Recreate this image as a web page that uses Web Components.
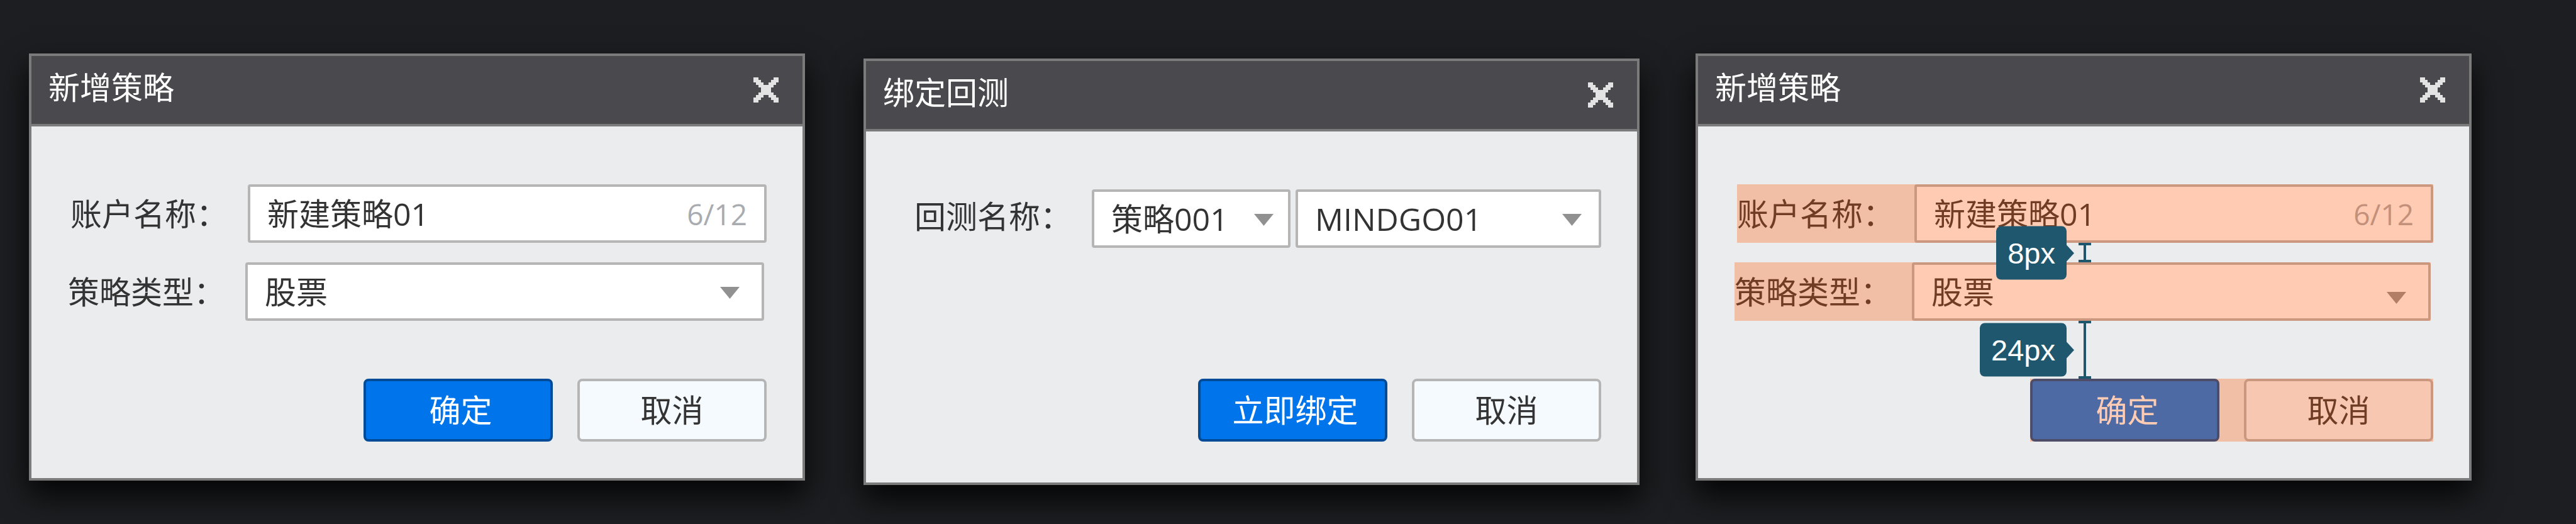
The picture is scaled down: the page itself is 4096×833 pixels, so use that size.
<!DOCTYPE html>
<html lang="zh-CN">
<head>
<meta charset="utf-8">
<title>策略弹窗</title>
<style>
  html { background: #1d1e21; }
  body {
    margin: 0;
    font-family: "Open Sans", "Noto Sans CJK SC", sans-serif;
    font-size: 50px;
    line-height: 68px;
    color: #333;
  }
</style>
</head>
<body>
<dialog-board></dialog-board>

<template id="dialog-board">
  <style>
    :host { display: flex; align-items: flex-start; padding: 85px 166px 64px 46px; }
    dialog-card { flex: 1 1 0; min-width: 0; }
    .bind { margin: 8px 89px 0 93px; --pad-end: 65px; }
    .pair { display: flex; gap: 8px; padding: 0 57px 0 77px; }
    .pair .wide { flex: 1; --arrow-end: 27px; }
    .pair .first { --control-width: 316px; --arrow-end: 23px; --label-lift: 8px; }
    .name { margin: 0 57px 0 62px; }
    .type { margin: 0 61px 0 58px; }
    .low { --arrow-drop: 16px; }
    button-bar { margin: 0 57px 0 auto; }
  </style>
  <dialog-card heading="新增策略">
    <text-field class="name" label="账户名称：" value="新建策略01" count="6/12"></text-field>
    <gap-rule></gap-rule>
    <pick-list class="type" label="策略类型：" value="股票"></pick-list>
    <gap-rule size="section"></gap-rule>
    <button-bar>
      <push-button kind="primary">确定</push-button>
      <push-button>取消</push-button>
    </button-bar>
  </dialog-card>
  <dialog-card class="bind" heading="绑定回测">
    <div class="pair">
      <pick-list class="first" label="回测名称：" value="策略001"></pick-list>
      <pick-list class="wide" hint="回测来源" value="MINDGO01"></pick-list>
    </div>
    <gap-rule size="page"></gap-rule>
    <button-bar>
      <push-button kind="primary">立即绑定</push-button>
      <push-button>取消</push-button>
    </button-bar>
  </dialog-card>
  <dialog-card heading="新增策略">
    <text-field class="name" label="账户名称：" value="新建策略01" count="6/12" marked></text-field>
    <gap-rule label="8px"></gap-rule>
    <pick-list class="type low" label="策略类型：" value="股票" marked></pick-list>
    <gap-rule size="section" label="24px"></gap-rule>
    <button-bar marked>
      <push-button kind="primary">确定</push-button>
      <push-button>取消</push-button>
    </button-bar>
  </dialog-card>
</template>

<template id="dialog-card">
  <style>
    :host {
      display: block;
      box-sizing: border-box;
      border: 4px solid #7b7b7b;
      background: #ebecee;
      box-shadow: 0 23px 46px rgba(0, 0, 0, .85);
    }
    header {
      display: flex;
      justify-content: space-between;
      align-items: center;
      height: 108px;
      padding: 0 38px 0 27px;
      border-bottom: 4px solid #7b7b7b;
      background: #4a494d;
    }
    h2 { margin: 0; padding-bottom: 8px; font: inherit; color: #fff; }
    button { display: block; padding: 0; border: 0; background: none; color: #e3e3e3; }
    svg { display: block; width: 40px; height: 40px; }
    .body { display: flex; flex-direction: column; padding: 92px 0 var(--pad-end, 58px); }
  </style>
  <header>
    <h2></h2>
    <button type="button" aria-label="关闭">
      <svg viewBox="0 0 10 10" fill="currentColor" shape-rendering="crispEdges"><path d="M0 0H2V1H3V2H4V3H6V2H7V1H8V0H10V2H9V3H8V4H7V6H8V7H9V8H10V10H8V9H7V8H6V7H4V8H3V9H2V10H0V8H1V7H2V6H3V4H2V3H1V2H0Z"/></svg>
    </button>
  </header>
  <div class="body"><slot></slot></div>
</template>

<template id="text-field">
  <style>
    :host { display: flex; align-items: center; position: relative; }
    :host([marked])::after { content: ""; position: absolute; inset: 0; background: rgba(255, 82, 0, .3); pointer-events: none; }
    label { flex: none; width: 282px; }
    .box {
      flex: 1;
      min-width: 0;
      display: flex;
      align-items: center;
      box-sizing: border-box;
      height: 93px;
      padding: 0 27px;
      border: 4px solid #b5b5b5;
      border-radius: 4px;
      background: #fff;
    }
    input { flex: 1; min-width: 0; height: 68px; padding: 0; border: 0; outline: 0; background: none; font: inherit; color: inherit; }
    .count { font-size: 46px; color: #a8abb0; }
  </style>
  <label for="control"></label>
  <div class="box"><input id="control" type="text" maxlength="12"><span class="count"></span></div>
</template>

<template id="pick-list">
  <style>
    :host { display: flex; align-items: center; position: relative; }
    :host([marked])::after { content: ""; position: absolute; inset: 0; background: rgba(255, 82, 0, .3); pointer-events: none; }
    label { flex: none; width: 282px; padding-bottom: var(--label-lift, 0); }
    label:empty { display: none; }
    .box { flex: 1 1 auto; width: var(--control-width, auto); min-width: 0; display: grid; align-items: center; }
    select, svg { grid-area: 1 / 1; }
    select {
      appearance: none;
      box-sizing: border-box;
      width: 100%;
      height: 93px;
      margin: 0;
      padding: 0 27px;
      border: 4px solid #b5b5b5;
      border-radius: 4px;
      background: #fff;
      font: inherit;
      color: inherit;
    }
    svg {
      justify-self: end;
      width: 31px;
      height: 19px;
      margin: calc(4px + var(--arrow-drop, 0px)) calc(4px + var(--arrow-end, 35px)) 0 0;
      fill: #919191;
      pointer-events: none;
    }
  </style>
  <label for="control"></label>
  <div class="box">
    <select id="control"><option></option></select>
    <svg viewBox="0 0 31 19" aria-hidden="true"><path d="M0 0H31L15.5 19Z"/></svg>
  </div>
</template>

<template id="gap-rule">
  <style>
    :host { display: flex; justify-content: flex-end; height: 31px; padding-right: 601px; position: relative; z-index: 1; }
    :host([size="section"]) { height: 92px; }
    :host([size="page"]) { height: 208px; }
    :host(:not([label])) .mark { display: none; }
    .mark {
      position: relative;
      box-sizing: border-box;
      width: 20px;
      border: solid #1f576f;
      border-width: 4px 0;
      background: linear-gradient(#1f576f, #1f576f) center / 4px 100% no-repeat;
    }
    .badge {
      position: absolute;
      right: 39px;
      top: 50%;
      transform: translateY(-50%);
      box-sizing: border-box;
      height: 85px;
      padding: 0 18px;
      border-radius: 8px;
      background: #1f576f;
      color: #fff;
      font: 47px/85px "Liberation Sans", sans-serif;
      white-space: nowrap;
    }
    .badge::after {
      content: "";
      position: absolute;
      left: 100%;
      top: 30px;
      border: solid transparent;
      border-width: 13px 0 13px 12px;
      border-left-color: #1f576f;
    }
  </style>
  <div class="mark"><span class="badge"></span></div>
</template>

<template id="button-bar">
  <style>
    :host { display: flex; gap: 39px; position: relative; }
    :host([marked])::after { content: ""; position: absolute; inset: 0; background: rgba(255, 82, 0, .3); pointer-events: none; }
  </style>
  <slot></slot>
</template>

<template id="push-button">
  <style>
    :host { display: block; }
    button {
      display: block;
      box-sizing: border-box;
      width: 301px;
      height: 100px;
      padding: 0;
      border: 4px solid #b5b5b5;
      border-radius: 8px;
      background: #f5faff;
      font: inherit;
      color: inherit;
    }
    :host([kind="primary"]) button { padding-left: 8px; border-color: #004b98; background: #0075eb; color: #fff; }
  </style>
  <button type="button"><slot></slot></button>
</template>

<script>
  class TemplateElement extends HTMLElement {
    connectedCallback() {
      if (this.shadowRoot) return;
      const root = this.attachShadow({ mode: "open" });
      root.append(document.getElementById(this.localName).content.cloneNode(true));
      this.fill(root);
    }
    attr(name) { return this.getAttribute(name) || ""; }
    fill() {}
  }

  class DialogCard extends TemplateElement {
    fill(root) { root.querySelector("h2").textContent = this.attr("heading"); }
  }

  class TextField extends TemplateElement {
    fill(root) {
      root.querySelector("label").textContent = this.attr("label");
      root.querySelector("input").value = this.attr("value");
      root.querySelector(".count").textContent = this.attr("count");
    }
  }

  class PickList extends TemplateElement {
    fill(root) {
      root.querySelector("label").textContent = this.attr("label");
      root.querySelector("option").textContent = this.attr("value");
      if (this.hasAttribute("hint")) root.querySelector("select").setAttribute("aria-label", this.attr("hint"));
    }
  }

  class GapRule extends TemplateElement {
    fill(root) { root.querySelector(".badge").textContent = this.attr("label"); }
  }

  customElements.define("push-button", class extends TemplateElement {});
  customElements.define("button-bar", class extends TemplateElement {});
  customElements.define("gap-rule", GapRule);
  customElements.define("pick-list", PickList);
  customElements.define("text-field", TextField);
  customElements.define("dialog-card", DialogCard);
  customElements.define("dialog-board", class extends TemplateElement {});
</script>
</body>
</html>
